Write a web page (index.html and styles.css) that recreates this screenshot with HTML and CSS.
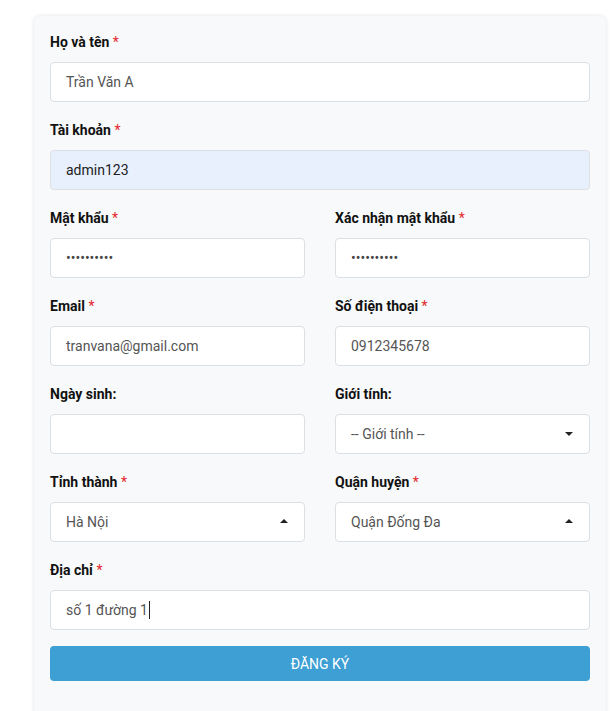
FILE: index.html
```html
<!DOCTYPE html>
<html lang="vi">
<head>
<meta charset="utf-8">
<title>Đăng ký</title>
<link rel="stylesheet" href="styles.css">
</head>
<body>
<div class="page">
  <form class="card">
    <div class="field">
      <label class="label">Họ và tên <span class="req">*</span></label>
      <input class="input" type="text" value="Trần Văn A">
    </div>
    <div class="field">
      <label class="label">Tài khoản <span class="req">*</span></label>
      <input class="input autofill" type="text" value="admin123">
    </div>
    <div class="row">
      <div class="field">
        <label class="label">Mật khẩu <span class="req">*</span></label>
        <input class="input pw" type="password" value="1234567890">
      </div>
      <div class="field">
        <label class="label">Xác nhận mật khẩu <span class="req">*</span></label>
        <input class="input pw" type="password" value="1234567890">
      </div>
    </div>
    <div class="row">
      <div class="field">
        <label class="label">Email <span class="req">*</span></label>
        <input class="input" type="text" value="tranvana@gmail.com">
      </div>
      <div class="field">
        <label class="label">Số điện thoại <span class="req">*</span></label>
        <input class="input" type="text" value="0912345678">
      </div>
    </div>
    <div class="row">
      <div class="field">
        <label class="label">Ngày sinh:</label>
        <input class="input" type="text" value="">
      </div>
      <div class="field">
        <label class="label">Giới tính:</label>
        <div class="select down">-- Giới tính --</div>
      </div>
    </div>
    <div class="row">
      <div class="field">
        <label class="label">Tỉnh thành <span class="req">*</span></label>
        <div class="select up">Hà Nội</div>
      </div>
      <div class="field">
        <label class="label">Quận huyện <span class="req">*</span></label>
        <div class="select up">Quận Đống Đa</div>
      </div>
    </div>
    <div class="field">
      <label class="label">Địa chỉ <span class="req">*</span></label>
      <div class="input textbox">số 1 đường 1<span class="caret"></span></div>
    </div>
    <button class="btn" type="button">ĐĂNG KÝ</button>
  </form>
</div>
</body>
</html>
```

FILE: styles.css
```css
* { box-sizing: border-box; }
html, body { margin: 0; padding: 0; background: #fff; }
body { font-family: Roboto, "Noto Sans", Arial, sans-serif; font-size: 14px; color: #212529; }
.page { padding: 16px 0 0 34px; width: 610px; height: 711px; overflow: hidden; }
.card {
  width: 572px;
  min-height: 720px;
  background: #f8f9fa;
  border-radius: 6px;
  box-shadow: 0 0 4px rgba(0,0,0,0.12);
  padding: 16px 16px 0 16px;
  display: flex;
  flex-direction: column;
}
.row { display: grid; grid-template-columns: 255px 255px; column-gap: 30px; }
.field { display: flex; flex-direction: column; margin-bottom: 18px; }
.label { font-weight: 700; font-size: 14px; line-height: 20px; color: #111; margin: 0 0 10px 0; }
.req { color: #e3262b; font-weight: 400; }
.input, .select {
  height: 40px;
  width: 100%;
  border: 1px solid #dcdfe3;
  border-radius: 4px;
  background: #fff;
  padding: 0 15px;
  font-family: Roboto, "Noto Sans", Arial, sans-serif;
  font-size: 14px;
  color: #555;
  outline: none;
  margin: 0;
}
.autofill { background: #e8f0fe; color: #222; }
.pw { color: #444; font-size: 14px; letter-spacing: 0; }
.textbox { display: flex; align-items: center; }
.caret { display: inline-block; width: 1px; height: 18px; background: #222; margin-left: 1px; }
.select { display: flex; align-items: center; position: relative; }
.select::after {
  content: "";
  position: absolute;
  right: 16px;
  top: 50%;
  width: 0; height: 0;
  border-left: 4px solid transparent;
  border-right: 4px solid transparent;
}
.select.down::after { border-top: 4px solid #222; margin-top: -2px; }
.select.up::after { border-bottom: 4px solid #222; margin-top: -3px; }
.btn {
  margin-top: -2px;
  height: 35px;
  width: 100%;
  border: none;
  border-radius: 4px;
  background: #3d9fd4;
  color: #fff;
  font-family: Roboto, "Noto Sans", Arial, sans-serif;
  font-size: 14px;
  font-weight: 400;
}
```
